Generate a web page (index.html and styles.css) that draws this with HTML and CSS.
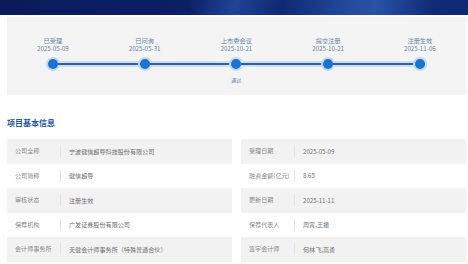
FILE: index.html
```html
<!DOCTYPE html>
<html lang="zh-CN">
<head>
    <meta charset="UTF-8">
    <meta name="viewport" content="width=device-width, initial-scale=1.0">
    <title>项目基本信息</title>
    <link rel="stylesheet" href="styles.css">
</head>
<body>
    <div class="banner"></div>

    <div class="page">
        <div class="timeline">
            <div class="step first">
                <div class="step-name">已受理</div>
                <div class="step-date">2025-05-09</div>
                <div class="track"><span class="seg"></span><span class="dot"></span><span class="seg"></span></div>
            </div>
            <div class="step">
                <div class="step-name">已问询</div>
                <div class="step-date">2025-05-31</div>
                <div class="track"><span class="seg"></span><span class="dot"></span><span class="seg"></span></div>
            </div>
            <div class="step">
                <div class="step-name">上市委会议</div>
                <div class="step-date">2025-10-21</div>
                <div class="track"><span class="seg"></span><span class="dot"></span><span class="seg"></span></div>
                <div class="step-note">通过</div>
            </div>
            <div class="step">
                <div class="step-name">提交注册</div>
                <div class="step-date">2025-10-21</div>
                <div class="track"><span class="seg"></span><span class="dot"></span><span class="seg"></span></div>
            </div>
            <div class="step last">
                <div class="step-name">注册生效</div>
                <div class="step-date">2025-11-06</div>
                <div class="track"><span class="seg"></span><span class="dot"></span><span class="seg"></span></div>
            </div>
        </div>

        <h2 class="section-title">项目基本信息</h2>

        <div class="info-grid">
            <div class="info-table">
                <div class="row"><span class="label">公司全称</span><span class="value">宁波健信超导科技股份有限公司</span></div>
                <div class="row"><span class="label">公司简称</span><span class="value">健信超导</span></div>
                <div class="row"><span class="label">审核状态</span><span class="value">注册生效</span></div>
                <div class="row"><span class="label">保荐机构</span><span class="value">广发证券股份有限公司</span></div>
                <div class="row"><span class="label">会计师事务所</span><span class="value">天健会计师事务所（特殊普通合伙）</span></div>
            </div>
            <div class="info-table">
                <div class="row"><span class="label">受理日期</span><span class="value">2025-05-09</span></div>
                <div class="row"><span class="label">融资金额(亿元)</span><span class="value">8.65</span></div>
                <div class="row"><span class="label">更新日期</span><span class="value">2025-11-11</span></div>
                <div class="row"><span class="label">保荐代表人</span><span class="value">周寅,王振</span></div>
                <div class="row"><span class="label">签字会计师</span><span class="value">何林飞,高勇</span></div>
            </div>
        </div>
    </div>
</body>
</html>
```

FILE: styles.css
```css
body {
    margin: 0;
    background: #fff;
    font-family: "Noto Sans CJK SC", "Noto Sans", sans-serif;
    color: #666;
}
.banner {
    height: 15px;
    background:
        linear-gradient(100deg, transparent 0%, transparent 40%, rgba(45, 90, 180, 0.6) 50%, transparent 60%, rgba(60, 110, 200, 0.55) 80%, transparent 92%),
        linear-gradient(90deg, #0a1a5c 0%, #0c2068 45%, #13327f 75%, #0f2874 100%);
}
.page {
    padding: 0 2px 0 7px;
}
.timeline {
    margin-top: 2px;
    height: 78px;
    background: #f4f4f4;
    display: grid;
    grid-template-columns: repeat(5, 91.75px);
    box-sizing: border-box;
    padding-top: 20px;
}
.step {
    display: flex;
    flex-direction: column;
    align-items: center;
    color: #6384ab;
    font-size: 6.2px;
    line-height: 7.5px;
}
.track {
    margin-top: 5px;
    width: 100%;
    height: 14px;
    display: flex;
    align-items: center;
}
.seg {
    flex: 1;
    height: 2px;
    background: #2c62a8;
    border-top: 2px solid #cddff1;
    border-bottom: 2px solid #cddff1;
}
.first .seg:first-child,
.last .seg:last-child {
    background: transparent;
    border-color: transparent;
}
.dot {
    width: 10px;
    height: 10px;
    border-radius: 50%;
    background: #1873d6;
    box-shadow: 0 0 0 2px #c4d8ee;
}
.step-note {
    margin-top: 6px;
    font-size: 5px;
    line-height: 6px;
    color: #4f7fbb;
}
.section-title {
    margin: 23px 0 0;
    font-size: 8px;
    line-height: 10px;
    font-weight: bold;
    color: #1c5aaa;
}
.info-grid {
    margin-top: 11px;
    display: grid;
    grid-template-columns: 225px 225px;
    gap: 9px;
}
.row {
    height: 24.5px;
    display: flex;
    align-items: center;
    font-size: 6.1px;
}
.row:nth-child(odd) {
    background: #f2f2f2;
}
.label {
    width: 45px;
    height: 12px;
    line-height: 12px;
    padding-left: 8px;
    border-right: 1px solid #e4e4e4;
    color: #888;
    white-space: nowrap;
}
.value {
    padding-left: 8px;
    color: #707070;
}
```
